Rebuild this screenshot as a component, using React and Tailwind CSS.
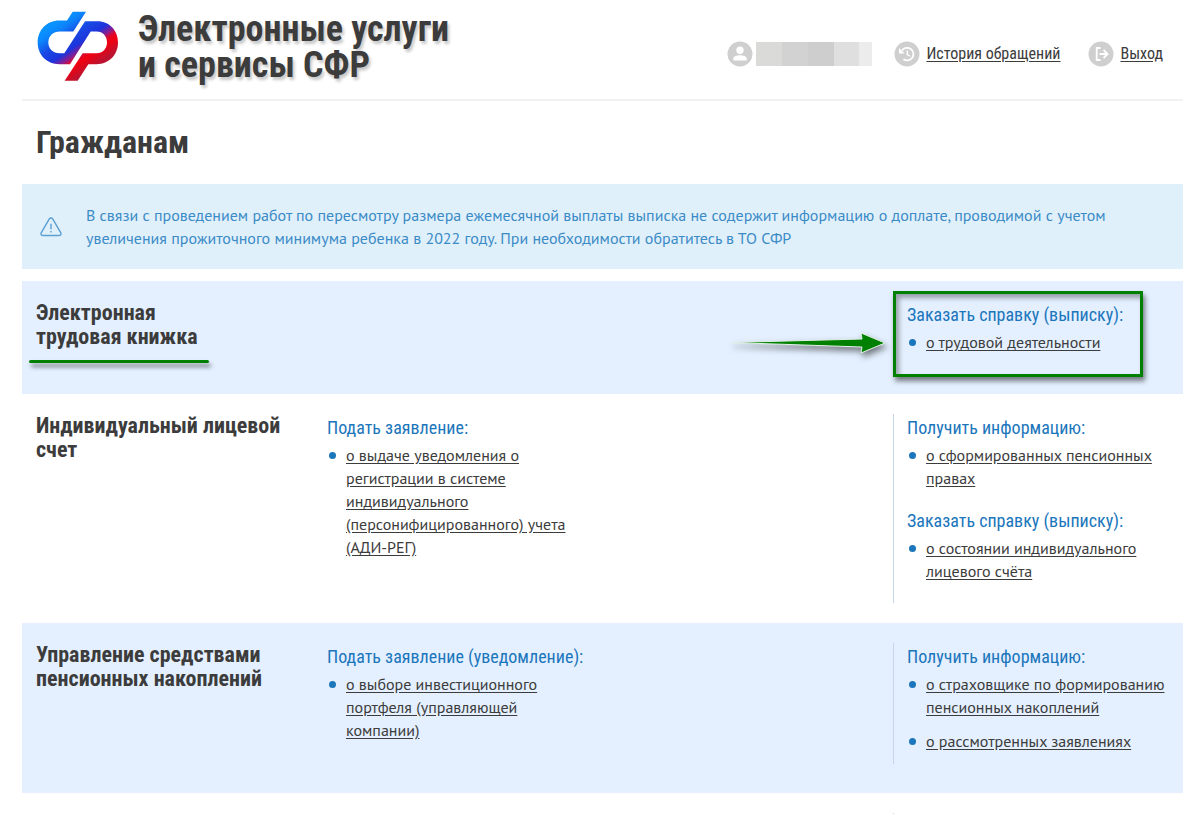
const sections = [
  {
    title: ["Электронная", "трудовая книжка"],
    apply: [],
    info: [
      { title: "Заказать справку (выписку):", links: [["о трудовой деятельности"]] },
    ],
    shaded: true,
    marked: true,
  },
  {
    title: ["Индивидуальный лицевой", "счет"],
    apply: [
      {
        title: "Подать заявление:",
        links: [["о выдаче уведомления о", "регистрации в системе", "индивидуального", "(персонифицированного) учета", "(АДИ-РЕГ)"]],
      },
    ],
    info: [
      { title: "Получить информацию:", links: [["о сформированных пенсионных", "правах"]] },
      { title: "Заказать справку (выписку):", links: [["о состоянии индивидуального", "лицевого счёта"]] },
    ],
  },
  {
    title: ["Управление средствами", "пенсионных накоплений"],
    apply: [
      {
        title: "Подать заявление (уведомление):",
        links: [["о выборе инвестиционного", "портфеля (управляющей", "компании)"]],
      },
    ],
    info: [
      {
        title: "Получить информацию:",
        links: [["о страховщике по формированию", "пенсионных накоплений"], ["о рассмотренных заявлениях"]],
      },
    ],
    shaded: true,
  },
];

function Logo() {
  return (
    <svg viewBox="9 7 246 212" className="h-[71px] w-[82px] shrink-0" role="img" aria-label="СФР">
      <defs>
        <linearGradient id="brand" gradientUnits="userSpaceOnUse" x1="41" y1="60" x2="138" y2="202">
          <stop offset="0" stopColor="#0a92ff" />
          <stop offset="0.12" stopColor="#0c84fa" />
          <stop offset="0.32" stopColor="#184ae4" />
          <stop offset="0.52" stopColor="#1c34dc" />
          <stop offset="0.64" stopColor="#8a1c90" />
          <stop offset="0.72" stopColor="#e00828" />
          <stop offset="0.8" stopColor="#f00010" />
          <stop offset="1" stopColor="#bc1430" />
        </linearGradient>
      </defs>
      <path
        fill="url(#brand)"
        d="M116 9H156L118 68H78C57 68 43 82 43 101C43 120 57 133 77 133H91L153 37H190C228 37 252 66 252 101C252 138 225 166 188 166H163L131 216H92L146 133H188C206 133 219 119 219 100C219 82 206 68 188 68H170L108 166H76C38 166 11 138 11 101C11 64 38 35 76 35H99Z"
      />
    </svg>
  );
}

function UserIcon() {
  return (
    <svg viewBox="0 0 26 26" className="size-[26px] shrink-0" aria-hidden="true">
      <circle cx="13" cy="13" r="12.5" fill="#cfcfcf" />
      <circle cx="13" cy="9.2" r="3.7" fill="#fff" />
      <path d="M6.2 19.4v-1.6c0-2.6 3.8-3.6 6.8-3.6s6.8 1 6.8 3.6v1.6z" fill="#fff" />
    </svg>
  );
}

function HistoryIcon() {
  return (
    <svg viewBox="0 0 26 26" className="size-[26px] shrink-0" aria-hidden="true">
      <circle cx="13" cy="13" r="12.5" fill="#cfcfcf" />
      <g fill="none" stroke="#fff">
        <path d="M8 9.5A6.3 6.3 0 1 1 9.4 18.2" strokeWidth="1.8" />
        <path d="M13.3 9.5v4l2.6 1.6" strokeWidth="1.4" />
      </g>
      <path d="M5 7v5.6h5.6z" fill="#fff" />
    </svg>
  );
}

function ExitIcon() {
  return (
    <svg viewBox="0 0 26 26" className="size-[26px] shrink-0" aria-hidden="true">
      <circle cx="13" cy="13" r="12.5" fill="#cfcfcf" />
      <g fill="none" stroke="#fff" strokeWidth="1.8">
        <path d="M12.5 7H8.7v12h3.8" />
        <path d="M11.5 13H19M15.6 9l4 4-4 4" />
      </g>
    </svg>
  );
}

function WarningIcon() {
  return (
    <svg viewBox="0 0 22 20" className="h-5 w-[22px] shrink-0" fill="none" stroke="#5c9fd2" strokeWidth="1.4" aria-hidden="true">
      <path d="M9.3 1.9 1.3 15.6c-.8 1.4.1 2.9 1.7 2.9h16c1.6 0 2.5-1.5 1.7-2.9L12.7 1.9c-.8-1.3-2.6-1.3-3.4 0Z" />
      <path d="M11 6.8v5.4M11 14v1.6" />
    </svg>
  );
}

function Lines({ lines }) {
  return lines.map((line, i) => (
    <span key={line}>
      {i > 0 && <br />}
      {line}
    </span>
  ));
}

function Group({ title, links }) {
  return (
    <section className="pt-[6px] first:pt-0">
      <h3 className="mb-[2px] text-[18px] leading-7 whitespace-nowrap text-[#1b76bc]">{title}</h3>
      <ul className="flex flex-col gap-[11px] pb-[11px] font-['PT_Sans','Noto_Sans',sans-serif] text-[16px] leading-[23px]">
        {links.map((lines) => (
          <li key={lines[0]} className="flex gap-[10px]">
            <span className="mt-2 ml-[2px] size-[7px] shrink-0 rounded-full bg-[#1b76bc]" />
            <a href="#" className="whitespace-nowrap underline underline-offset-2">
              <Lines lines={lines} />
            </a>
          </li>
        ))}
      </ul>
    </section>
  );
}

function Arrow() {
  return (
    <svg viewBox="0 0 156 28" className="absolute top-7 right-[calc(100%+8px)] h-7 w-[156px] overflow-visible drop-shadow-[2px_4px_3px_rgba(0,0,0,0.5)]" aria-hidden="true">
      <path d="M1 13.5 132 10 131 4 155 14 131 24 132 18Z" fill="#008000" stroke="#e2efe6" strokeWidth="1" />
    </svg>
  );
}

export default function App() {
  return (
    <div className="bg-white pr-[17px] pl-[22px] font-['Roboto_Condensed',Roboto,sans-serif] text-[#3c3c3c]">
      <header className="flex items-center justify-between border-b-2 border-[#f2f2f2] pt-[11px] pr-5 pb-[13px] pl-[15px]">
        <a href="#" className="flex items-start gap-[19px]">
          <Logo />
          <span className="h-[75px] text-[36px] leading-9 font-bold whitespace-nowrap [text-shadow:2px_3px_3px_rgba(0,0,0,0.22)]">
            Электронные услуги
            <br />и сервисы СФР
          </span>
        </a>
        <nav className="mt-[10px] flex items-center gap-[22px] text-[16px] leading-6 whitespace-nowrap">
          <div className="flex items-center gap-[3px]">
            <UserIcon />
            <div className="flex h-6">
              <span className="w-[26px] bg-[#dadad8]" />
              <span className="w-[26px] bg-[#d2d2d2]" />
              <span className="w-[26px] bg-[#cecece]" />
              <span className="w-[25px] bg-[#dfdfdf]" />
              <span className="w-[13px] bg-[#ececec]" />
            </div>
          </div>
          <a href="#" className="flex items-center gap-[6px]">
            <HistoryIcon />
            <span className="underline underline-offset-2">История обращений</span>
          </a>
          <a href="#" className="ml-[6px] flex items-center gap-[6px]">
            <ExitIcon />
            <span className="underline underline-offset-2">Выход</span>
          </a>
        </nav>
      </header>

      <main>
        <h1 className="pt-[23px] pb-6 pl-[14px] text-[32px] leading-9 font-bold">Гражданам</h1>

        <div className="mb-3 flex items-center gap-6 bg-[#e0f0fb] pt-5 pb-[19px] pl-[18px] font-['PT_Sans','Noto_Sans',sans-serif] text-[16px] leading-[23px] text-[#3b8bc6]">
          <WarningIcon />
          <p>
            В связи с проведением работ по пересмотру размера ежемесячной выплаты выписка не содержит информацию о доплате, проводимой с учетом
            <br />
            увеличения прожиточного минимума ребенка в 2022 году. При необходимости обратитесь в ТО СФР
          </p>
        </div>

        {sections.map(({ title, apply, info, shaded, marked }) => (
          <section
            key={title[0]}
            className={`grid grid-cols-[305fr_566fr_290fr] pt-5 ${shaded ? "bg-[#e4f0ff] pb-[29px]" : "pb-5"}`}
          >
            <div className="pl-[14px]">
              <h2 className="relative inline-block text-[22px] leading-6 font-bold whitespace-nowrap">
                <Lines lines={title} />
                {marked && (
                  <span className="absolute top-[59px] -right-[11px] -left-[7px] h-[3px] rounded-full bg-[#008000] shadow-[2px_4px_4px_rgba(0,0,0,0.5)]" />
                )}
              </h2>
            </div>
            <div>
              {apply.map((g) => (
                <Group key={g.title} {...g} />
              ))}
            </div>
            <div
              className={`relative border-l pl-[13px] ${marked ? "border-transparent" : "border-[#c6d6e8]"} ${shaded ? "" : "pb-[9px]"}`}
            >
              {info.map((g) => (
                <Group key={g.title} {...g} />
              ))}
              {marked && (
                <>
                  <Arrow />
                  <div className="pointer-events-none absolute -top-[10px] -left-[1px] h-[86px] w-[250px] border-3 border-[#008000] shadow-[2px_4px_5px_rgba(0,0,0,0.5),inset_3px_4px_5px_rgba(0,0,0,0.35)]" />
                </>
              )}
            </div>
          </section>
        ))}

        <section className="grid grid-cols-[305fr_566fr_290fr] pt-5">
          <div className="col-start-3 h-px border-l border-[#c6d6e8]" />
        </section>
      </main>
    </div>
  );
}
